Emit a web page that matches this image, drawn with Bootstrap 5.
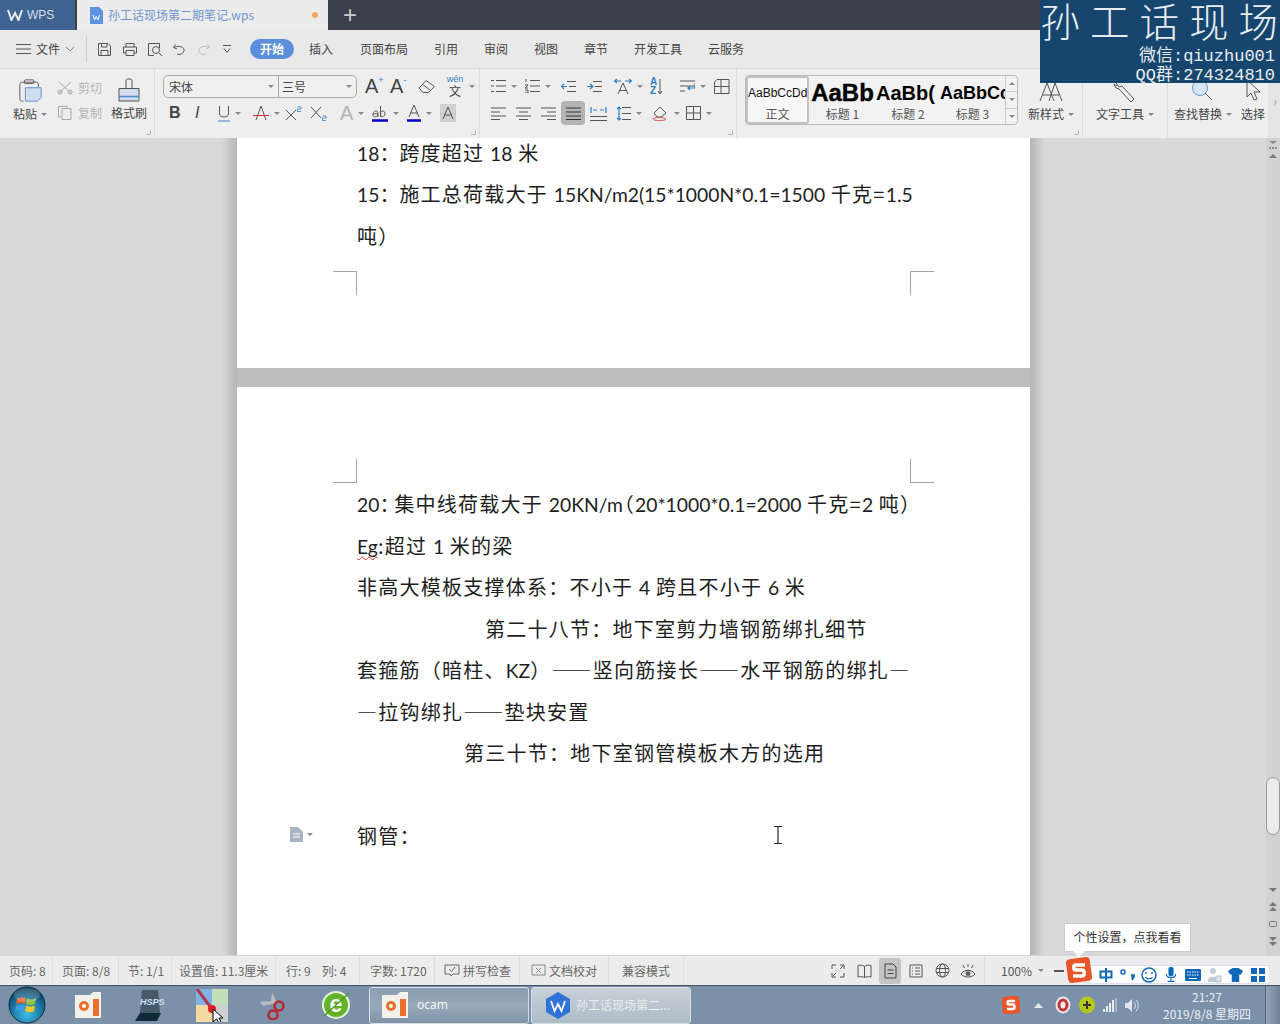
<!DOCTYPE html>
<html lang="zh">
<head>
<meta charset="utf-8">
<title>WPS</title>
<link href="https://cdn.jsdelivr.net/npm/bootstrap@5.3.0/dist/css/bootstrap.min.css" rel="stylesheet">
<style>
html,body{margin:0;height:1024px;overflow:hidden}
body{font-family:"Noto Sans CJK SC","Liberation Sans",sans-serif;font-size:12px;color:#444;background:#d9d9d9}
svg{display:block;flex:none}
.ln{fill:none;stroke:#555;stroke-width:1}
.ln-b{fill:none;stroke:#2f7fc4;stroke-width:1.2}
.desk{width:1280px;height:1024px;position:relative;overflow:hidden}
.tabbar{height:30px;background:#3c404c;flex:none}
.tab-wps{width:75px;background:#3f6392;color:#d7dfea;font-family:"Liberation Sans",sans-serif;padding-left:7px;gap:4px}
.tab-doc{width:251px;margin-left:2px;background:#ececec;color:#6f96cf;padding-left:12px;gap:5px}
.tab-dot{width:6px;height:6px;border-radius:50%;background:#f0a860;margin-left:53px}
.tab-plus{color:#ccc;font-size:24px;font-weight:300;margin-left:15px;line-height:1;font-family:"Liberation Sans",sans-serif}
.menubar{height:39px;background:#e9e9e9;border-bottom:1px solid #dcdcdc;padding-left:16px;flex:none}
.file-btn{width:71px;gap:5px;border-right:1px solid #ccc;height:26px;flex:none}
.qa{margin-left:10px;width:153px;flex:none}
.qa>div{width:25px}
.pill{width:44px;height:20px;border-radius:10px;background:#5b8fdc;color:#fff;font-weight:700;text-align:center;line-height:20px;flex:none}
.mi{text-align:center;color:#444;flex:none}
.mw48{width:48px}.mw52{width:52px}.mw54{width:54px}.mw60{width:60px}.mw72{width:72px}.mw76{width:76px}
.ribbon{height:69px;background:#eeeeee;flex:none}
.gp{height:69px;border-right:1px solid #ddd;position:relative;flex:none}
.gp-clip{width:155px}
.gp-font{width:325px;padding-left:8px}
.gp-para{width:257px;padding-left:11px}
.gp-style{width:346px;padding-left:8px}
.gp-text{width:85px}
.gp-find{width:70px;border-right:0}
.gp-sel{width:30px;flex:none}
.rrow{height:24px;margin-top:5px}
.rrow+.rrow{margin-top:3px}
.ps6{padding-left:6px}
.ml5{margin-left:5px}
.grip{position:absolute;right:3px;bottom:3px;width:5px;height:5px;border-right:1px solid #bbb;border-bottom:1px solid #bbb}
.clip-big{width:44px;margin-left:8px;padding-top:9px;flex:none}
.clip-lab{font-size:12px;margin-top:2px;color:#444;white-space:nowrap}
.mut{color:#b3b3b3}
.clip-mid{width:54px;margin-left:5px;padding-top:10px;gap:7px;flex:none}
.clip-fmt{padding-top:9px;width:36px}
.fmt-box{width:194px;height:23px;border:1px solid #aaa;border-radius:5px;background:#f0f0f0;margin-top:1px}
.fmt-a{width:115px;padding-left:5px;border-right:1px solid #aaa;height:100%}
.fmt-b{flex:1;padding-left:3px}
.caret{width:0;height:0;border-left:3px solid transparent;border-right:3px solid transparent;border-top:3px solid #888;flex:none}
.caret-up{transform:rotate(180deg)}
.c{display:flex;align-items:center;height:24px;gap:5px;flex:none;font-family:"Liberation Sans",sans-serif;color:#444;line-height:1}
.w20{width:20px}.w23{width:23px}.w25{width:25px}.w26{width:26px}.w27{width:27px}.w28{width:28px}.w30{width:30px}.w32{width:32px}.w33{width:33px}.w34{width:34px}.w35{width:35px}.w36{width:36px}
.gA{font-size:20px;font-weight:300;color:#444}
.gA.mut{color:#b3b3b3}
.sup{font-size:9px;color:#2f7fc4;align-self:flex-start;margin:2px 0 0 -5px}
.az{font-size:10px;color:#2f7fc4;font-weight:700;line-height:.95}
.wen{width:18px;text-align:center;line-height:1}
.wen i{display:block;font-style:normal;font-size:9px;color:#2f7fc4;line-height:10px}
.wen b{display:block;font-weight:400;font-size:12px;line-height:14px;font-family:"Noto Sans CJK SC",sans-serif}
.sel-b{background:#b4b4b4;border-radius:4px;width:24px;justify-content:center}
.gal{width:273px;height:50px;border:1px solid #bbb;border-radius:4px;margin-top:6px;background:#f2f2f2}
.sty{overflow:hidden;text-align:center;height:100%;font-family:"Liberation Sans",sans-serif;white-space:nowrap;color:#111;flex:none}
.sty .t{display:block;height:30px;line-height:34px;font-weight:700;color:#000;overflow:hidden}
.sty .l{display:block;font-family:"Noto Sans CJK SC",sans-serif;color:#555;font-size:12px;line-height:15px}
.s0{width:63px;border:2px solid #c2c2c2;border-radius:3px;background:#f7f7f7}
.s0 .t{font-weight:400;font-size:12px;height:28px;line-height:30px;color:#111}
.s1{width:67px}.s1 .t{font-size:24px;-webkit-text-stroke:.4px #000}
.s2{width:64px}.s2 .t{font-size:20px;text-align:left}
.s3{width:65px}.s3 .t{font-size:18px;text-align:left}
.galbar{flex:1;border-left:1px solid #ccc}
.galbar>div{flex:1;border-bottom:1px solid #ccc}
.galbar>div:last-child{border-bottom:0}
.big{padding-top:10px;height:69px}
.big .lb{margin-top:2px;white-space:nowrap;color:#444}
.nstyle{margin-left:10px;width:46px;flex:none}
.rib-more{width:14px;background:#e4e4e4;color:#999;line-height:1;text-align:center;padding-top:26px;margin-left:auto;flex:none}
.work{height:817px;background:#d9d9d9;position:relative;overflow:hidden;flex:none}
.pages{width:793px;margin-left:237px;background:#bdbdbd;height:817px;position:relative}
.pages::before,.pages::after{content:"";position:absolute;top:0;bottom:0;width:15px}
.pages::before{left:-15px;background:linear-gradient(90deg,rgba(0,0,0,0),rgba(0,0,0,.17))}
.pages::after{right:-15px;background:linear-gradient(270deg,rgba(0,0,0,0),rgba(0,0,0,.17))}
.pg{background:#fff;position:relative;padding:0 120px;font-size:20px;line-height:41.5px;color:#1d1d1d;letter-spacing:1.25px}
.pg1{height:230px;padding-bottom:112px}
.pg2{height:568px;padding-top:96px;margin-top:19px}
.tx{height:41.5px;white-space:nowrap}
.latn{font-family:"Lato","Noto Sans CJK SC",sans-serif;font-size:19.3px;letter-spacing:0}
.colon{letter-spacing:0}
.colon2{letter-spacing:-5px}
.paren{margin-left:-9px}
.jus{text-align:justify;text-align-last:justify;width:553px}
.ctr1{padding-left:128px}
.ctr2{padding-left:107px}
.eg{text-decoration:underline wavy #d33;text-decoration-thickness:1px;text-underline-offset:2px;text-decoration-skip-ink:none}
.crop{position:absolute;width:24px;height:24px;border-color:#a5a5a5;border-style:solid;border-width:0}
.cp1{left:96px;top:133px;border-top-width:1px;border-right-width:1px}
.cp2{right:96px;top:133px;border-top-width:1px;border-left-width:1px}
.cp3{left:96px;top:72px;border-bottom-width:1px;border-right-width:1px}
.cp4{right:96px;top:72px;border-bottom-width:1px;border-left-width:1px}
.sbar{position:absolute;right:0;top:0;bottom:0;width:14px;background:#d2d2d2;padding-top:2px}
.thumb{position:absolute;top:639px;left:0;width:14px;height:58px;border:1px solid #999;border-radius:7px;background:#ebebeb}
.sb-low{position:absolute;bottom:9px;left:3px;gap:10px}
.status{height:30px;background:#ececec;border-top:1px solid #d6d6d6;color:#6a6a6a;position:relative;flex:none}
.st{height:100%;white-space:nowrap;color:#666;border-right:1px solid #dedede;gap:3px;flex:none}
.st1{width:53px;padding-left:9px}.st2{width:66px;padding-left:9px}.st3{width:53px;padding-left:9px}
.st4{width:104px;padding-left:7px}.st5{width:84px;padding-left:10px;gap:11px}.st6{width:75px;padding-left:10px}
.st7{width:85px;padding-left:9px}.st8{width:89px;padding-left:11px}.st9{width:75px;padding-left:13px}
.view-row{height:100%;padding-left:141px;flex:none}
.vi{width:26px;height:26px;justify-content:center;border-radius:3px;flex:none}
.vi.on{background:#c4c4c4;width:22px;margin:0 2px}
.zoomv{margin-left:3px;border-left:1px solid #dedede;height:100%;padding-left:16px;width:70px;gap:6px;color:#555;flex:none}
.zdash{width:10px;height:2px;background:#555;flex:none}
.ime{position:absolute;left:1089px;top:9px;width:181px;height:19px;background:#fff;border:1px solid #dde;padding-left:5px;grid-template-columns:repeat(8,21.7px);align-items:center;justify-items:center}
.tipbox{position:absolute;left:1064px;top:923px;width:127px;height:29px;background:#fff;border:1px solid #ccc;color:#333;text-align:center;line-height:26px;font-size:12px}
.tipbox::after{content:"";position:absolute;left:8px;bottom:-6px;border-left:6px solid transparent;border-right:6px solid transparent;border-top:6px solid #fff}
.sgou{position:absolute;left:1065px;top:956px;width:28px;height:28px}
.task{height:39px;background:#7b90a9;border-top:1px solid #3e4f60;color:#fff;position:relative;flex:none}
.orb{width:57px;padding-left:8px;flex:none}
.ti{width:62px;justify-content:center;flex:none}
.tb{width:160px;height:37px;border:1px solid #d6dde4;border-radius:3px;background:linear-gradient(#8a9db2,#9aa9ba 50%,#7f93aa);padding-left:12px;gap:8px;color:#f4f6f8;font-size:12px;margin-left:2px;flex:none}
.tb2{background:linear-gradient(#c7d0d8,#aebbc7);color:#e8edf1;padding-left:14px;gap:6px}
.ocamt{font-family:"Noto Sans",sans-serif;font-size:12px}
.tray{margin-left:auto;height:100%}
.ml8{margin-left:8px}.ml12{margin-left:12px}.ml14{margin-left:14px}
.clock{width:92px;margin-left:21px;text-align:center;line-height:17px;color:#edf1f5;font-size:12px;white-space:nowrap;flex:none}
.showd{width:15px;height:100%;margin-left:12px;background:linear-gradient(90deg,#93a4b7,#6f8398);border-left:1px solid #55677a;flex:none}
.wm{position:absolute;left:1040px;top:0;width:240px;height:83px;background:#16466e;color:#e8edf2;text-align:right;padding-right:5px;overflow:hidden}
.wm-a{font-size:39.500px;line-height:40px;letter-spacing:10px;margin-right:-3px;white-space:nowrap;height:47px;font-weight:300}
.wm-a span{letter-spacing:0}
.wm-b{font-family:"Liberation Mono","Noto Sans CJK SC",monospace;font-size:17px;line-height:19px;white-space:nowrap}
.ibeam{position:absolute;left:774px;top:826px}
.para-ic{position:absolute;left:290px;top:827px;gap:4px}
</style>
</head>
<body>
<div class="desk d-flex flex-column">

<div class="tabbar d-flex">
  <div class="tab-wps d-flex align-items-center">
    <svg width="16" height="12" viewBox="0 0 16 12"><path d="M1 1 4.500 11 8 4 11.500 11 15 1" fill="none" stroke="#e6ecf4" stroke-width="2"/></svg>
    <span>WPS</span>
  </div>
  <div class="tab-doc d-flex align-items-center">
    <svg width="14" height="17" viewBox="0 0 14 17"><path d="M1 0H10L14 4V17H1Z" fill="#5b93e0"/><path d="M4 8 5.500 13 7.200 9.500 9 13 10.500 8" fill="none" stroke="#fff"/></svg>
    <span>孙工话现场第二期笔记.wps</span>
    <span class="tab-dot"></span>
  </div>
  <div class="tab-plus d-flex align-items-center">+</div>
</div>

<div class="menubar d-flex align-items-center">
  <div class="file-btn d-flex align-items-center">
    <svg width="15" height="10" viewBox="0 0 15 10"><path class="ln" d="M0 .5H15M0 5H15M0 9.500H15"/></svg>
    <span>文件</span>
    <svg width="10" height="6" viewBox="0 0 10 6"><path d="M1 1 5 5 9 1" fill="none" stroke="#888"/></svg>
  </div>
  <div class="qa d-flex align-items-center">
    <div><svg width="15" height="15" viewBox="0 0 15 15"><path class="ln" d="M1.500 1.500H11L13.500 4V13.500H1.500ZM4 13.500V8.500H11V13.500M4.500 1.500V5H10V1.500"/></svg></div>
    <div><svg width="16" height="15" viewBox="0 0 16 15"><path class="ln" d="M4 5V1.500H12V5M4 11H1.500V5H14.500V11H12M4 8.500H12V13.500H4Z"/></svg></div>
    <div><svg width="16" height="15" viewBox="0 0 16 15"><path class="ln" d="M12.500 6V1.500H1.500V13.500H7"/><circle class="ln" cx="9" cy="8" r="3.500"/><path class="ln" d="M11.500 10.500 15 14"/></svg></div>
    <div><svg width="14" height="13" viewBox="0 0 14 13"><path class="ln" d="M3.500 1.500 1.500 4.500 5 6M1.500 4.500C8 1.500 14 5 11.500 9C10 11.500 7 12 5 11"/></svg></div>
    <div><svg width="14" height="13" viewBox="0 0 14 13"><path d="M10.500 1.500 12.500 4.500 9 6M12.500 4.500C6 1.500 0 5 2.500 9C4 11.500 7 12 9 11" fill="none" stroke="#bbb"/></svg></div>
    <div><svg width="10" height="10" viewBox="0 0 10 10"><path class="ln" d="M1 1.500H9M2 4.500 5 8.500 8 4.500"/></svg></div>
  </div>
  <div class="pill">开始</div>
  <div class="mi mw54">插入</div>
  <div class="mi mw72">页面布局</div>
  <div class="mi mw52">引用</div>
  <div class="mi mw48">审阅</div>
  <div class="mi mw52">视图</div>
  <div class="mi mw48">章节</div>
  <div class="mi mw76">开发工具</div>
  <div class="mi mw60">云服务</div>
</div>

<div class="ribbon d-flex">
  <div class="gp gp-clip d-flex">
    <div class="clip-big d-flex flex-column align-items-center">
      <svg width="25" height="25" viewBox="0 0 27 25"><path class="ln" d="M6 24H4.500C3 24 2 23 2 21.500V6C2 4.500 3 3.500 4.500 3.500H20C21.500 3.500 22 4.500 22 6V9"/><rect class="ln" x="7" y="1" width="10" height="4" rx="1"/><path d="M8 9.500H25V20L21 24H8Z" fill="#cfdded" stroke="#5b8fc9"/></svg>
      <div class="clip-lab d-flex align-items-center gap-1">粘贴<span class="caret"></span></div>
    </div>
    <div class="clip-mid d-flex flex-column">
      <div class="d-flex align-items-center mut gap-1">
        <svg width="17" height="14" viewBox="0 0 17 14"><path d="M2 1 14 12M14 1 2 12" fill="none" stroke="#aaa"/><circle cx="3" cy="11" r="2" fill="none" stroke="#aaa"/><circle cx="13" cy="11" r="2" fill="none" stroke="#aaa"/></svg>
        <span>剪切</span>
      </div>
      <div class="d-flex align-items-center mut gap-1">
        <svg width="17" height="16" viewBox="0 0 17 16"><path d="M4 12H1.500V1.500H10V3M5 3.500H14V14.500H5Z" fill="none" stroke="#aaa"/></svg>
        <span>复制</span>
      </div>
    </div>
    <div class="clip-fmt d-flex flex-column align-items-center flex-none">
      <svg width="24" height="24" viewBox="0 0 24 24"><path class="ln" d="M9 10V3C9 1.500 10 1 11 1H13C14 1 15 1.500 15 3V10"/><path d="M2 10.500H22V23H2Z" fill="#cfdded" stroke="#555"/><path d="M2 18.500H22" stroke="#4c87c7" stroke-width="1.500"/></svg>
      <div class="clip-lab">格式刷</div>
    </div>
    <span class="grip"></span>
  </div>
  <div class="gp gp-font">
    <div class="rrow d-flex">
      <div class="fmt-box d-flex align-items-center flex-none">
        <div class="fmt-a d-flex align-items-center justify-content-between pe-1">宋体<span class="caret"></span></div>
        <div class="fmt-b d-flex align-items-center justify-content-between pe-1">三号<span class="caret"></span></div>
      </div>
      <div class="c w25 ms-2"><span class="gA">A</span><span class="sup">+</span></div>
      <div class="c w28"><span class="gA">A</span><span class="sup">-</span></div>
      <div class="c w28"><svg width="18" height="15" viewBox="0 0 18 15"><path class="ln" d="M1 9 8 1.500 16.500 7.500 10.500 13.500H5ZM4.500 5.500 12 11"/></svg></div>
      <div class="c w33"><span class="wen"><i>wén</i><b>文</b></span><span class="caret"></span></div>
    </div>
    <div class="rrow d-flex ps6">
      <div class="c w26"><b class="fs-6">B</b></div>
      <div class="c w23"><i class="fs-6 fw-light">I</i></div>
      <div class="c w35"><svg width="12" height="17" viewBox="0 0 12 17"><path class="ln" d="M1.500 1V9C1.500 13 10.500 13 10.500 9V1"/><path d="M0 16H12" stroke="#3a7fc4"/></svg><span class="caret"></span></div>
      <div class="c w32"><svg width="16" height="17" viewBox="0 0 16 17"><path class="ln" d="M3 15 8 1 13 15"/><path d="M0 10.500H16" stroke="#d33"/></svg><span class="caret"></span></div>
      <div class="c w25"><svg width="18" height="17" viewBox="0 0 18 17"><path class="ln" d="M1 5 11 15M11 5 1 15"/><path d="M12.500 2H16V4H12.500V6.500H16" fill="none" stroke="#2f7fc4" stroke-width=".8"/></svg></div>
      <div class="c w30"><svg width="18" height="17" viewBox="0 0 18 17"><path class="ln" d="M1 2 11 13M11 2 1 13"/><path d="M12.500 11H16V13H12.500V15.500H16" fill="none" stroke="#2f7fc4" stroke-width=".8"/></svg></div>
      <div class="c w32"><span class="gA mut">A</span><span class="caret"></span></div>
      <div class="c w35"><svg width="16" height="19" viewBox="0 0 16 19"><path class="ln" d="M1 11C1 6 6 6 6 9V13M6 10C3 9 1 10 1 11.500C1 13 5 13.500 6 11M8.500 2V13M8.500 10C8.500 6 13 6 13 10C13 13 8.500 14 8.500 10"/><path d="M0 16.500H16" stroke="#0000c8" stroke-width="2.500"/></svg><span class="caret"></span></div>
      <div class="c w33"><svg width="14" height="19" viewBox="0 0 14 19"><path class="ln" d="M2 13 7 1 12 13M3.500 9H10.500"/><path d="M0 16.500H14" stroke="#0000c8" stroke-width="2.500"/></svg><span class="caret"></span></div>
      <div class="c"><svg width="16" height="18" viewBox="0 0 16 18"><rect width="16" height="18" fill="#d0d0d0"/><path class="ln" d="M3 15 8 3 13 15M4.500 11H11.500"/></svg></div>
    </div>
    <span class="grip"></span>
  </div>
  <div class="gp gp-para">
    <div class="rrow d-flex">
      <div class="c w34"><svg width="15" height="14" viewBox="0 0 15 14"><path class="ln" d="M5 1.500H15M5 7H15M5 12.500H15M0 1.500H3M0 7H3M0 12.500H3"/></svg><span class="caret"></span></div>
      <div class="c w36"><svg width="15" height="14" viewBox="0 0 15 14"><path class="ln" d="M5 1.500H15M5 7H15M5 12.500H15M1 0V3M0 6H3L0 9H3M0 11H3V14H0"/></svg><span class="caret"></span></div>
      <div class="c w26"><svg width="15" height="13" viewBox="0 0 15 13"><path class="ln" d="M6 1.500H15M8 6.500H15M6 11.500H15"/><path class="ln-b" d="M6 6.500H0M3 4 .5 6.500 3 9"/></svg></div>
      <div class="c w27"><svg width="15" height="13" viewBox="0 0 15 13"><path class="ln" d="M6 1.500H15M8 6.500H15M6 11.500H15"/><path class="ln-b" d="M0 6.500H6M3 4 6 6.500 3 9"/></svg></div>
      <div class="c w36"><svg width="18" height="17" viewBox="0 0 18 17"><path class="ln" d="M4 16 9 5 14 16M5.500 12.500H12.500"/><path class="ln-b" d="M0 3H7M3 1 .5 3 3 5M11 3H18M15 1 17.500 3 15 5"/></svg><span class="caret"></span></div>
      <div class="c w30 gap-0"><span class="az">A<br>Z</span><svg width="6" height="17" viewBox="0 0 6 17"><path class="ln" d="M3 1V16M1 13 3 16 5 13"/></svg></div>
      <div class="c w33"><svg width="15" height="14" viewBox="0 0 15 14"><path class="ln" d="M0 2H15M0 7H15M0 12H5"/><path class="ln-b" d="M15 4V9H8M10 7 8 9 10 11"/></svg><span class="caret"></span></div>
      <div class="c"><svg width="17" height="17" viewBox="0 0 17 17"><path class="ln" d="M4 1.500H16V15.500H1.500V4ZM8 1.500V15.500M1.500 8.500H16"/></svg></div>
    </div>
    <div class="rrow d-flex">
      <div class="c w25"><svg width="15" height="13" viewBox="0 0 15 13"><path class="ln" d="M0 1H15M0 5H9M0 9H15M0 12.500H9"/></svg></div>
      <div class="c w25"><svg width="15" height="13" viewBox="0 0 15 13"><path class="ln" d="M0 1H15M3 5H12M0 9H15M3 12.500H12"/></svg></div>
      <div class="c w20"><svg width="15" height="13" viewBox="0 0 15 13"><path class="ln" d="M0 1H15M6 5H15M0 9H15M6 12.500H15"/></svg></div>
      <div class="c sel-b"><svg width="15" height="13" viewBox="0 0 15 13"><path d="M0 1H15M0 5H15M0 9H15M0 12.500H15" fill="none" stroke="#333"/></svg></div>
      <div class="c w26 ml5"><svg width="17" height="15" viewBox="0 0 17 15"><path class="ln" d="M0 10.500H17M0 14.500H17"/><path class="ln-b" d="M1 1V7M16 1V7M3 4H7M10 4H14"/></svg></div>
      <div class="c w36"><svg width="15" height="15" viewBox="0 0 15 15"><path class="ln" d="M6 1.500H15M6 7.500H15M6 13.500H15"/><path class="ln-b" d="M3 1V14M1 3 3 1 5 3M1 12 3 14 5 12"/></svg><span class="caret"></span></div>
      <div class="c w34"><svg width="17" height="16" viewBox="0 0 17 16"><path class="ln" d="M2 8 8 2 14 8 9 12H5Z"/><path d="M1 14C1 12 12 12 14 14C14 16 1 16 1 14Z" fill="none" stroke="#d55"/></svg><span class="caret"></span></div>
      <div class="c"><svg width="15" height="14" viewBox="0 0 15 14"><path class="ln" d="M.5 .5H14.500V13.500H.5ZM7.500 .5V13.500M.5 7H14.500"/></svg><span class="caret"></span></div>
    </div>
    <span class="grip"></span>
  </div>
  <div class="gp gp-style d-flex">
    <div class="gal d-flex flex-none">
      <div class="sty s0"><span class="t">AaBbCcDd</span><span class="l">正文</span></div>
      <div class="sty s1"><span class="t">AaBb</span><span class="l">标题 1</span></div>
      <div class="sty s2"><span class="t">AaBb(</span><span class="l">标题 2</span></div>
      <div class="sty s3"><span class="t">AaBbCc</span><span class="l">标题 3</span></div>
      <div class="galbar d-flex flex-column">
        <div class="d-flex justify-content-center align-items-center"><span class="caret caret-up"></span></div>
        <div class="d-flex justify-content-center align-items-center"><span class="caret"></span></div>
        <div class="d-flex justify-content-center align-items-center"><span class="caret"></span></div>
      </div>
    </div>
    <div class="big nstyle d-flex flex-column align-items-center">
      <svg width="24" height="24" viewBox="0 0 24 24"><path class="ln" d="M1 22 8 4 15 22M4 16H12M10 22 16 4 23 22M12 16H20"/></svg>
      <div class="lb d-flex align-items-center gap-1">新样式<span class="caret"></span></div>
    </div>
    <span class="grip"></span>
  </div>
  <div class="gp gp-text big d-flex flex-column align-items-center">
    <svg width="24" height="24" viewBox="0 0 24 24"><path class="ln" d="M5 1 3 4 6 8 9 7 21 20 18 23 6 10 3 9 1 5 4 7"/></svg>
    <div class="lb d-flex align-items-center gap-1">文字工具<span class="caret"></span></div>
  </div>
  <div class="gp gp-find big d-flex flex-column align-items-center">
    <svg width="24" height="24" viewBox="0 0 24 24"><circle cx="9" cy="9" r="7.500" fill="#d8e6f3" stroke="#5b9bd5"/><path class="ln" d="M14 14 21 21"/></svg>
    <div class="lb d-flex align-items-center gap-1">查找替换<span class="caret"></span></div>
  </div>
  <div class="gp-sel big d-flex flex-column align-items-center">
    <svg width="16" height="24" viewBox="0 0 16 24"><path class="ln" d="M2 1V18L6 14 9 21 12 20 9 13H15Z"/></svg>
    <div class="lb">选择</div>
  </div>
  <div class="rib-more">›</div>
</div>

<div class="work">
  <div class="pages">
    <div class="pg pg1 d-flex flex-column justify-content-end">
      <div class="tx"><span class="latn">18</span><span class="colon">：</span>跨度超过 <span class="latn">18</span> 米</div>
      <div class="tx"><span class="latn">15</span><span class="colon">：</span>施工总荷载大于 <span class="latn">15KN/m2(15*1000N*0.1=1500</span> 千克=<span class="latn">1.5</span></div>
      <div class="tx">吨）</div>
      <span class="crop cp1"></span>
      <span class="crop cp2"></span>
    </div>
    <div class="pg pg2">
      <div class="tx jus"><span class="latn">20</span><span class="colon2">：</span>集中线荷载大于 <span class="latn">20KN/m</span><span class="paren">（</span><span class="latn">20*1000*0.1=2000</span> 千克=<span class="latn">2</span> 吨）</div>
      <div class="tx"><span class="latn eg">Eg</span>:超过 <span class="latn">1</span> 米的梁</div>
      <div class="tx">非高大模板支撑体系：不小于 <span class="latn">4</span> 跨且不小于 <span class="latn">6</span> 米</div>
      <div class="tx ctr1">第二十八节：地下室剪力墙钢筋绑扎细节</div>
      <div class="tx jus">套箍筋（暗柱、<span class="latn">KZ</span>）——竖向筋接长——水平钢筋的绑扎—</div>
      <div class="tx">—拉钩绑扎——垫块安置</div>
      <div class="tx ctr2">第三十节：地下室钢管模板木方的选用</div>
      <div class="tx">&nbsp;</div>
      <div class="tx">钢管：</div>
      <span class="crop cp3"></span>
      <span class="crop cp4"></span>
    </div>
  </div>
  <div class="sbar d-flex flex-column align-items-center">
    <svg width="10" height="10" viewBox="0 0 10 10"><path d="M1 1H9L5 4ZM1 7H3V9H1ZM4 7H6V9H4ZM7 7H9V9H7Z" fill="#888"/></svg>
    <svg class="mt-1" width="8" height="4" viewBox="0 0 8 4"><path d="M0 4 4 0 8 4Z" fill="#777"/></svg>
    <div class="thumb"></div>
    <div class="sb-low d-flex flex-column align-items-center">
      <svg width="8" height="4" viewBox="0 0 8 4"><path d="M0 0 4 4 8 0Z" fill="#777"/></svg>
      <svg width="8" height="9" viewBox="0 0 8 9"><path d="M0 4 4 0 8 4ZM0 9 4 5 8 9Z" fill="#777"/></svg>
      <svg width="8" height="6" viewBox="0 0 8 6"><rect x=".5" y=".5" width="7" height="5" rx="1" fill="none" stroke="#777"/></svg>
      <svg width="8" height="9" viewBox="0 0 8 9"><path d="M0 0 4 4 8 0ZM0 5 4 9 8 5Z" fill="#777"/></svg>
    </div>
  </div>
</div>

<div class="status d-flex align-items-center">
  <div class="st st1 d-flex align-items-center">页码: 8</div>
  <div class="st st2 d-flex align-items-center">页面: 8/8</div>
  <div class="st st3 d-flex align-items-center">节: 1/1</div>
  <div class="st st4 d-flex align-items-center">设置值: 11.3厘米</div>
  <div class="st st5 d-flex align-items-center"><span>行: 9</span><span>列: 4</span></div>
  <div class="st st6 d-flex align-items-center">字数: 1720</div>
  <div class="st st7 d-flex align-items-center"><svg width="16" height="13" viewBox="0 0 16 13"><path d="M1 1H15V10H9L7 12 6 10H1ZM5 5 7.500 7.500 11 3" fill="none" stroke="#666"/></svg>拼写检查</div>
  <div class="st st8 d-flex align-items-center"><svg width="15" height="13" viewBox="0 0 15 13"><path d="M1 1H14V11H1ZM5 4 10 9M10 4 5 9" fill="none" stroke="#888"/></svg>文档校对</div>
  <div class="st st9 d-flex align-items-center">兼容模式</div>
  <div class="view-row d-flex align-items-center">
    <div class="vi d-flex align-items-center"><svg width="14" height="14" viewBox="0 0 14 14"><path class="ln" d="M1 5V1H5M9 1H13V5M13 9V13H9M5 13H1V9M2 12 5 9M12 2 9 5"/></svg></div>
    <div class="vi d-flex align-items-center"><svg width="15" height="14" viewBox="0 0 15 14"><path class="ln" d="M7.500 2.500C6 1 3 1 1 1.500V13C3 12.500 6 12.500 7.500 13.500C9 12.500 12 12.500 14 13V1.500C12 1 9 1 7.500 2.500ZM7.500 2.500V13.500"/></svg></div>
    <div class="vi on d-flex align-items-center"><svg width="13" height="16" viewBox="0 0 13 16"><path d="M1 1H9L12 4V15H1ZM3.500 7H9.500M3.500 10.500H9.500" fill="none" stroke="#444"/></svg></div>
    <div class="vi d-flex align-items-center"><svg width="14" height="14" viewBox="0 0 14 14"><path class="ln" d="M1 1H13V13H1ZM3 4H4M6 4H11M3 7H4M6 7H11M3 10H4M6 10H11"/></svg></div>
    <div class="vi d-flex align-items-center"><svg width="15" height="15" viewBox="0 0 15 15"><circle class="ln" cx="7.500" cy="7.500" r="6.500"/><ellipse class="ln" cx="7.500" cy="7.500" rx="3" ry="6.500"/><path class="ln" d="M1 5.500H14M1 9.500H14"/></svg></div>
    <div class="vi d-flex align-items-center"><svg width="16" height="16" viewBox="0 0 16 16"><path class="ln" d="M1 11C4 6 12 6 15 11C12 15 4 15 1 11ZM8 1V4M3 2 4.500 5M13 2 11.500 5"/><circle cx="8" cy="10.500" r="2.500" fill="#666"/></svg></div>
    <div class="zoomv d-flex align-items-center">100%<span class="caret"></span></div>
    <span class="zdash"></span>
  </div>
  <div class="ime d-grid">
    <svg width="14" height="14" viewBox="0 0 14 14"><path d="M7 0V14M1.500 3.500H12.500V9.500H1.500Z" fill="none" stroke="#1168b8" stroke-width="2"/></svg>
    <svg width="16" height="12" viewBox="0 0 16 12"><circle cx="3" cy="3" r="2" fill="none" stroke="#1168b8" stroke-width="1.500"/><path d="M11 6H14V8L12 11" fill="#1168b8" stroke="#1168b8" stroke-width="1.500"/></svg>
    <svg width="16" height="16" viewBox="0 0 16 16"><circle cx="8" cy="8" r="7" fill="none" stroke="#1168b8" stroke-width="1.500"/><path d="M5 5V7M11 5V7M4.500 10C6 12.500 10 12.500 11.500 10" fill="none" stroke="#1168b8" stroke-width="1.300"/></svg>
    <svg width="12" height="17" viewBox="0 0 14 18"><rect x="4" y="0" width="6" height="11" rx="3" fill="#1168b8"/><path d="M1.500 8C1.500 14 12.500 14 12.500 8M7 13V17M3 17H11" fill="none" stroke="#1168b8" stroke-width="1.300"/></svg>
    <svg width="16" height="12" viewBox="0 0 16 12"><rect width="16" height="12" rx="1" fill="#1168b8"/><path d="M2 3H14M2 6H14" stroke="#fff" stroke-dasharray="1.500 1"/><path d="M4 9.500H12" stroke="#fff"/></svg>
    <svg width="16" height="16" viewBox="0 0 16 16"><circle cx="7" cy="4" r="3" fill="#c5cdd6"/><path d="M1.500 15C1.500 8 12.500 8 12.500 15Z" fill="#c5cdd6"/><rect x="10" y="9" width="5" height="6" fill="#dfe4ea" stroke="#aab4be" stroke-width=".7"/></svg>
    <svg width="15" height="14" viewBox="0 0 16 15"><path d="M5 0H11L16 3 14 7H12V15H4V7H2L0 3Z" fill="#1168b8"/></svg>
    <svg width="14" height="14" viewBox="0 0 14 14"><path d="M0 0H6V6H0ZM8 0H14V6H8ZM0 8H6V14H0ZM8 8H14V14H8Z" fill="#1168b8"/></svg>
  </div>
</div>

<div class="task d-flex align-items-center">
  <div class="orb">
    <svg width="38" height="38" viewBox="0 0 38 38"><defs><radialGradient id="og" cx=".5" cy=".75" r=".75"><stop offset="0" stop-color="#3cc0e6"/><stop offset=".6" stop-color="#1a6f9c"/><stop offset="1" stop-color="#0c3550"/></radialGradient></defs><circle cx="19" cy="19" r="18" fill="url(#og)" stroke="#0b2e44"/><path d="M9 13C12 11 15 11 18 12.500L17 18C14 16.500 11 16.500 8 18Z" fill="#e8632f"/><path d="M19 12.500C22 14 25 14 28 12L27 18C24 19.500 21 19.500 18 18Z" fill="#8fc13e"/><path d="M8 19.500C11 18 14 18 17 19.500L16 25C13 24 10 24 7 25Z" fill="#3d9be0"/><path d="M18 19.500C21 21 24 21 27 19.500L26 25.500C23 26.500 20 26.500 17 25Z" fill="#f5c32c"/><ellipse cx="19" cy="9" rx="13" ry="7" fill="#fff" opacity=".18"/></svg>
  </div>
  <div class="ti d-flex"><svg width="27" height="26" viewBox="0 0 27 26"><path d="M0 3H15L18 0H26V26H0Z" fill="#f4f0ea"/><rect x="18" y="7" width="6" height="17" fill="#e8702a"/><circle cx="9" cy="14" r="5" fill="#e8702a"/><circle cx="9" cy="14" r="2" fill="#fff"/></svg></div>
  <div class="ti d-flex"><svg width="32" height="33" viewBox="0 0 32 33"><path d="M8 1H24L26 24H6Z" fill="#46596b"/><path d="M6 24H27L23 32H1Z" fill="#0e2a36"/><text x="6" y="16" font-size="9" font-weight="700" font-style="italic" font-family="Liberation Sans" fill="#cfe0ee">HSPS</text></svg></div>
  <div class="ti d-flex"><svg width="32" height="33" viewBox="0 0 32 33"><rect width="16" height="16" fill="#7fb3e6"/><rect x="16" width="16" height="16" fill="#bfe0b8"/><rect y="16" width="16" height="17" fill="#f6d9a2"/><rect x="16" y="16" width="16" height="17" fill="#cfcfcf"/><path d="M1 0 16 20" stroke="#b4364e" stroke-width="3"/><circle cx="16" cy="20" r="4" fill="#e01d1d"/><path d="M17 20V33L20.500 30 23 34 25 33 23 29H27Z" fill="#fff" stroke="#000"/></svg></div>
  <div class="ti d-flex"><svg width="30" height="30" viewBox="0 0 30 30"><path d="M13 2 18 13 4 16 1 12 12 11Z" fill="#b9bcc0"/><circle cx="20" cy="16" r="4.500" fill="none" stroke="#b52a2e" stroke-width="2.500"/><circle cx="14" cy="25" r="4.500" fill="none" stroke="#b52a2e" stroke-width="2.500"/></svg></div>
  <div class="ti d-flex"><svg width="30" height="30" viewBox="0 0 30 30"><circle cx="15" cy="15" r="13" fill="#62b32a" stroke="#e8f3d8" stroke-width="2"/><text x="15" y="22" text-anchor="middle" font-size="23" font-weight="700" font-family="Liberation Sans" fill="#fff">e</text><path d="M3 26 28 3" stroke="#4d9a22" stroke-width="1.500"/></svg></div>
  <div class="tb d-flex align-items-center"><svg width="27" height="26" viewBox="0 0 27 26"><path d="M0 3H15L18 0H26V26H0Z" fill="#f4f0ea"/><rect x="18" y="7" width="6" height="17" fill="#e8702a"/><circle cx="9" cy="14" r="5" fill="#e8702a"/><circle cx="9" cy="14" r="2" fill="#fff"/></svg><span class="ocamt">ocam</span></div>
  <div class="tb tb2 d-flex align-items-center"><svg width="24" height="27" viewBox="0 0 24 27"><path d="M12 0 24 7V20L12 27 0 20V7Z" fill="#2f72d8"/><path d="M5 9 8.500 19 12 12 15.500 19 19 9" fill="none" stroke="#fff" stroke-width="1.800"/></svg><span>孙工话现场第二...</span></div>
  <div class="tray d-flex align-items-center">
    <svg width="18" height="18" viewBox="0 0 18 18"><rect width="18" height="18" rx="3" fill="#e8552a" transform="rotate(-8 9 9)"/><path d="M13 5H7C5 5 5 8.500 7 8.500H11C13 8.500 13 13 11 13H5" fill="none" stroke="#fff" stroke-width="2.500"/></svg>
    <svg class="ml14" width="9" height="5" viewBox="0 0 9 5"><path d="M0 5 4.500 0 9 5Z" fill="#e6eaee"/></svg>
    <svg class="ml12" width="16" height="18" viewBox="0 0 16 18"><ellipse cx="8" cy="9" rx="7.500" ry="8.500" fill="#e8e8e8"/><ellipse cx="8" cy="9" rx="5.500" ry="6.500" fill="#c8353d"/><ellipse cx="8" cy="9" rx="2.500" ry="3.500" fill="#eee"/></svg>
    <svg class="ml8" width="16" height="18" viewBox="0 0 16 18"><ellipse cx="8" cy="9" rx="8" ry="8.500" fill="#b7c814"/><path d="M8 5V13M4 9H12" stroke="#333" stroke-width="2"/></svg>
    <svg class="ml8" width="14" height="14" viewBox="0 0 14 14"><path d="M0 11H2V14H0ZM3 8H5V14H3ZM6 5H8V14H6ZM9 2H11V14H9Z" fill="#e8edf2"/><path d="M12 0H14V14H12Z" fill="#a9b8c6"/></svg>
    <svg class="ml8" width="15" height="15" viewBox="0 0 15 15"><path d="M0 5H3L7 1V14L3 10H0Z" fill="#dfe5ea"/><path d="M9 4C11 6 11 9 9 11M11 2C14 5 14 10 11 13" fill="none" stroke="#dfe5ea"/></svg>
    <div class="clock">21:27<br>2019/8/8 星期四</div>
    <div class="showd"></div>
  </div>
</div>

<div class="wm">
  <div class="wm-a">孙工话现<span>场</span></div>
  <div class="wm-b">微信:qiuzhu001</div>
  <div class="wm-b">QQ群:274324810</div>
</div>
<div class="tipbox">个性设置，点我看看</div>
<svg class="sgou" viewBox="0 0 28 28"><rect x="2" y="2" width="24" height="24" rx="4" fill="#e8552a" transform="rotate(-8 14 14)"/><path d="M20 9H11C8 9 8 14 11 14H17C20 14 20 20 17 20H8" fill="none" stroke="#fff" stroke-width="3.500"/></svg>
<svg class="ibeam" width="8" height="18" viewBox="0 0 8 18"><path d="M0 .5H8M0 17.500H8M4 1V17" fill="none" stroke="#222" stroke-width="1.200"/></svg>
<div class="para-ic d-flex align-items-center">
  <svg width="13" height="15" viewBox="0 0 13 15"><path d="M0 0H8L13 5V15H0Z" fill="#a9b4c2"/><path d="M3 7H10M3 10H10" stroke="#fff"/></svg>
  <span class="caret"></span>
</div>
</div>
</body>
</html>
